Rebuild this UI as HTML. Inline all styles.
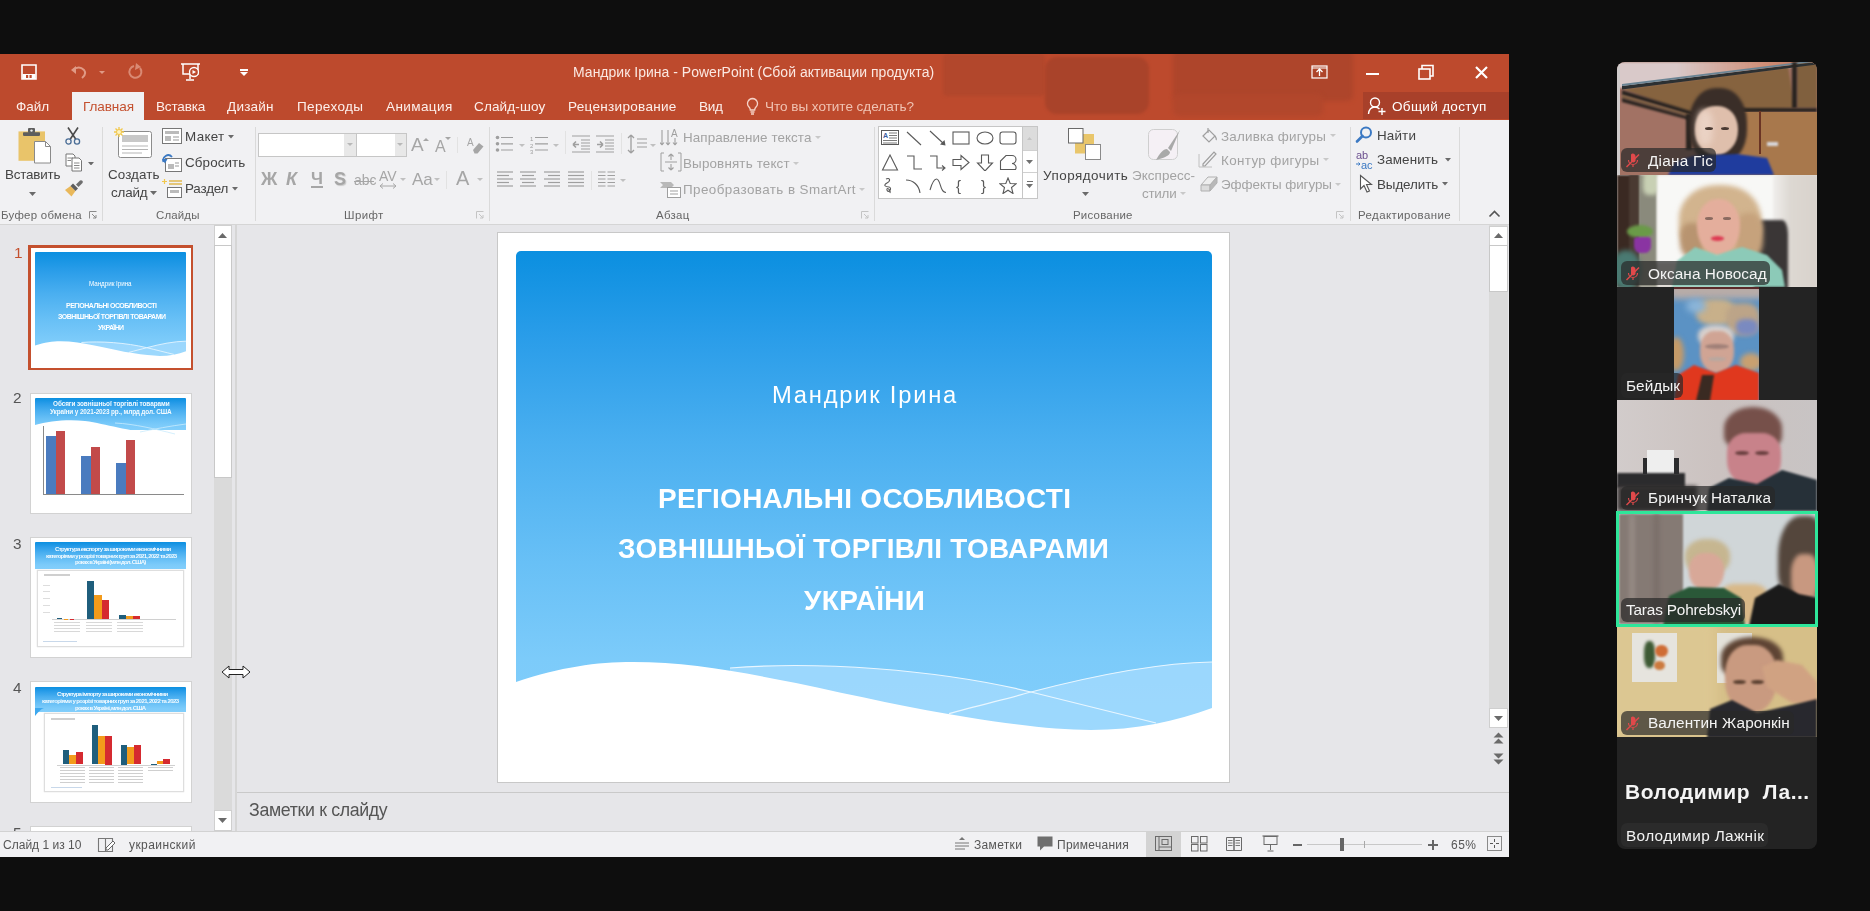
<!DOCTYPE html>
<html><head><meta charset="utf-8">
<style>
*{margin:0;padding:0;box-sizing:border-box}
html,body{width:1870px;height:911px;overflow:hidden;background:#0e0e0e;font-family:"Liberation Sans",sans-serif}
.a{position:absolute}
.tx{position:absolute;white-space:nowrap;will-change:transform}
</style></head><body>
<div class="a" style="left:0px;top:54px;width:1509px;height:66px;background:#bd4a2d;"></div><div class="a" style="left:0;top:54px;width:1509px;height:66px;overflow:hidden"><div class="a" style="left:943px;top:0px;width:102px;height:42px;border-radius:4px;background:#b2472c;filter:blur(1.5px)"></div><div class="a" style="left:1045px;top:3px;width:104px;height:57px;border-radius:12px;background:#a9432a;filter:blur(1.5px)"></div><div class="a" style="left:1173px;top:-4px;width:180px;height:51px;border-radius:6px;background:#ae452b;filter:blur(2px)"></div><div class="a" style="left:1173px;top:40px;width:150px;height:22px;border-radius:6px;background:#b2472c;filter:blur(2px)"></div></div><div class="a" style="left:72px;top:92px;width:72px;height:29px;background:#f1f1f3;"></div><div class="a" style="left:0px;top:120px;width:1509px;height:104px;background:#f1f1f3;"></div><div class="a" style="left:0px;top:224px;width:1509px;height:1px;background:#d5d5d5;"></div><div class="a" style="left:0px;top:225px;width:1509px;height:606px;background:#e6e6e9;"></div><div class="a" style="left:0px;top:831px;width:1509px;height:1px;background:#d2d2d2;"></div><div class="a" style="left:0px;top:832px;width:1509px;height:25px;background:#f1f1f3;"></div><span class="tx" style="left:573.00px;top:66.28px;font-size:13.97px;line-height:13.97px;color:#fbe8e2;font-weight:normal;letter-spacing:0.032px;font-family:"Liberation Sans",sans-serif;">Мандрик Ірина - PowerPoint (Сбой активации продукта)</span><svg class="a" style="left:21px;top:64px;" width="16" height="16" viewBox="0 0 16 16"><path d="M1 1H15V15H1Z" fill="none" stroke="#fff" stroke-width="1.6"/><rect x="1.5" y="10" width="13" height="5" fill="#fff"/><rect x="5" y="11" width="2.2" height="3" fill="#bd4a2d"/><rect x="8.5" y="11" width="2.2" height="3" fill="#bd4a2d"/></svg><svg class="a" style="left:70px;top:63px;" width="18" height="18" viewBox="0 0 18 18"><path d="M3 7 Q9 2 14 7 Q17 11 12 15" fill="none" stroke="#e09a85" stroke-width="2"/><path d="M1 7L6 3V11Z" fill="#e09a85"/></svg><svg class="a" style="left:99.0px;top:70.5px;" width="6" height="3" viewBox="0 0 6 3"><path d="M0 0H6L3.0 3Z" fill="#e09a85"/></svg><svg class="a" style="left:126px;top:63px;" width="18" height="18" viewBox="0 0 18 18"><path d="M14 5 A6 6 0 1 1 8 3" fill="none" stroke="#d98a74" stroke-width="2"/><path d="M10 0L15 4L9 7Z" fill="#d98a74"/></svg><svg class="a" style="left:180px;top:62px;" width="22" height="20" viewBox="0 0 22 20"><path d="M1 2H20M3 2V12H18V2" fill="none" stroke="#fff" stroke-width="1.5"/><path d="M10 12V17M6 18H14" stroke="#fff" stroke-width="1.5"/><circle cx="14" cy="10" r="4.5" fill="#bd4a2d" stroke="#fff" stroke-width="1.3"/><path d="M12.5 8V12L16 10Z" fill="#fff"/></svg><svg class="a" style="left:240.0px;top:72.0px;" width="8" height="4" viewBox="0 0 8 4"><path d="M0 0H8L4.0 4Z" fill="#fff"/></svg><div class="a" style="left:240px;top:69.3px;width:8px;height:1.5px;background:#fff;"></div><svg class="a" style="left:1311px;top:65px;" width="17" height="15" viewBox="0 0 17 15"><rect x="1" y="1" width="15" height="12" fill="none" stroke="#fff" stroke-width="1.2"/><path d="M8.5 11V4M5.5 7L8.5 4L11.5 7" fill="none" stroke="#fff" stroke-width="1.3"/><path d="M1 3H16" stroke="#fff" stroke-width="1"/></svg><div class="a" style="left:1366px;top:73px;width:13px;height:2px;background:#fff;"></div><svg class="a" style="left:1418px;top:64px;" width="17" height="17" viewBox="0 0 17 17"><rect x="1" y="5" width="11" height="10" fill="none" stroke="#fff" stroke-width="1.6"/><path d="M4 5V1.5H15V12H12" fill="none" stroke="#fff" stroke-width="1.6"/></svg><svg class="a" style="left:1474px;top:65px;" width="15" height="15" viewBox="0 0 15 15"><path d="M2 2L13 13M13 2L2 13" stroke="#fff" stroke-width="2.2"/></svg><span class="tx" style="left:16.00px;top:99.93px;font-size:13.55px;line-height:13.55px;color:#fdf0ec;font-weight:normal;letter-spacing:-0.057px;font-family:"Liberation Sans",sans-serif;">Файл</span><span class="tx" style="left:82.60px;top:99.93px;font-size:13.55px;line-height:13.55px;color:#c4502f;font-weight:normal;letter-spacing:-0.097px;font-family:"Liberation Sans",sans-serif;">Главная</span><span class="tx" style="left:155.60px;top:99.93px;font-size:13.55px;line-height:13.55px;color:#fdf0ec;font-weight:normal;letter-spacing:-0.168px;font-family:"Liberation Sans",sans-serif;">Вставка</span><span class="tx" style="left:227.00px;top:99.93px;font-size:13.55px;line-height:13.55px;color:#fdf0ec;font-weight:normal;letter-spacing:0.206px;font-family:"Liberation Sans",sans-serif;">Дизайн</span><span class="tx" style="left:296.50px;top:99.93px;font-size:13.55px;line-height:13.55px;color:#fdf0ec;font-weight:normal;letter-spacing:0.355px;font-family:"Liberation Sans",sans-serif;">Переходы</span><span class="tx" style="left:385.50px;top:99.93px;font-size:13.55px;line-height:13.55px;color:#fdf0ec;font-weight:normal;letter-spacing:0.374px;font-family:"Liberation Sans",sans-serif;">Анимация</span><span class="tx" style="left:474.00px;top:99.93px;font-size:13.55px;line-height:13.55px;color:#fdf0ec;font-weight:normal;letter-spacing:0.128px;font-family:"Liberation Sans",sans-serif;">Слайд-шоу</span><span class="tx" style="left:568.40px;top:99.93px;font-size:13.55px;line-height:13.55px;color:#fdf0ec;font-weight:normal;letter-spacing:0.291px;font-family:"Liberation Sans",sans-serif;">Рецензирование</span><span class="tx" style="left:698.80px;top:99.93px;font-size:13.55px;line-height:13.55px;color:#fdf0ec;font-weight:normal;letter-spacing:-0.277px;font-family:"Liberation Sans",sans-serif;">Вид</span><svg class="a" style="left:746px;top:97px;" width="13" height="19" viewBox="0 0 13 19"><path d="M6.5 1.5A5 5 0 0 0 3 10C4 11 4.3 12 4.3 13H8.7C8.7 12 9 11 10 10A5 5 0 0 0 6.5 1.5Z" fill="none" stroke="#f6d3c8" stroke-width="1.3"/><path d="M4.5 15H8.5M5 17H8" stroke="#f6d3c8" stroke-width="1.3"/></svg><span class="tx" style="left:765.00px;top:99.93px;font-size:13.55px;line-height:13.55px;color:#f0c3b3;font-weight:normal;letter-spacing:-0.031px;font-family:"Liberation Sans",sans-serif;">Что вы хотите сделать?</span><div class="a" style="left:1363px;top:92px;width:146px;height:27px;background:#a8402a;"></div><svg class="a" style="left:1367px;top:96px;" width="20" height="20" viewBox="0 0 20 20"><circle cx="8" cy="6.5" r="4.5" fill="none" stroke="#fff" stroke-width="1.4"/><path d="M1.5 18C2 13 5 11 8 11C10 11 11.5 12 12.5 13" fill="none" stroke="#fff" stroke-width="1.4"/><path d="M15 12V19M11.5 15.5H18.5" stroke="#fff" stroke-width="1.4"/></svg><span class="tx" style="left:1392.40px;top:99.93px;font-size:13.55px;line-height:13.55px;color:#ffffff;font-weight:normal;letter-spacing:0.304px;font-family:"Liberation Sans",sans-serif;">Общий доступ</span><div class="a" style="left:102px;top:127px;width:1px;height:94px;background:#dadada;"></div><div class="a" style="left:254.5px;top:127px;width:1.0px;height:94px;background:#dadada;"></div><div class="a" style="left:489px;top:127px;width:1px;height:94px;background:#dadada;"></div><div class="a" style="left:874px;top:127px;width:1px;height:94px;background:#dadada;"></div><div class="a" style="left:1349.5px;top:127px;width:1.0px;height:94px;background:#dadada;"></div><div class="a" style="left:1458.5px;top:127px;width:1.0px;height:94px;background:#dadada;"></div><svg class="a" style="left:16px;top:126px;" width="40" height="40" viewBox="0 0 40 40"><rect x="2.5" y="5.4" width="26.5" height="29.4" fill="#e9c46a"/><rect x="7" y="6.3" width="17" height="3.6" rx="0.8" fill="#5e5e5e"/><rect x="12" y="2" width="7" height="5" rx="1" fill="#5e5e5e"/><circle cx="15.5" cy="4.6" r="1.2" fill="#eee"/><path d="M18.5 15.5H29.5L34.5 20.5V37H18.5Z" fill="#fff" stroke="#8a8a8a" stroke-width="1"/><path d="M29.5 15.5V20.5H34.5" fill="none" stroke="#8a8a8a" stroke-width="1"/></svg><span class="tx" style="left:5.00px;top:168.25px;font-size:13.41px;line-height:13.41px;color:#444444;font-weight:normal;letter-spacing:-0.194px;font-family:"Liberation Sans",sans-serif;">Вставить</span><svg class="a" style="left:29.0px;top:191.5px;" width="7" height="4" viewBox="0 0 7 4"><path d="M0 0H7L3.5 4Z" fill="#6a6a6a"/></svg><svg class="a" style="left:64px;top:127px;" width="18" height="19" viewBox="0 0 18 19"><path d="M4 0.5L11.8 12.2M14 0.5L6.2 12.2" stroke="#4a4a4a" stroke-width="1.6"/><circle cx="4.5" cy="14.5" r="2.6" fill="none" stroke="#4a6d96" stroke-width="1.3"/><circle cx="13" cy="14.5" r="2.6" fill="none" stroke="#4a6d96" stroke-width="1.3"/></svg><svg class="a" style="left:65px;top:153px;" width="18" height="19" viewBox="0 0 18 19"><path d="M1 1H8L10 3V13H1Z" fill="#fff" stroke="#777" stroke-width="1"/><path d="M7 5H14L16.5 7.5V18H7Z" fill="#fff" stroke="#777" stroke-width="1"/><path d="M2.5 5H8M2.5 7.5H6M9 10H14.5M9 12.5H14.5M9 15H14.5" stroke="#888" stroke-width="1"/></svg><svg class="a" style="left:87.5px;top:161.75px;" width="6" height="3.5" viewBox="0 0 6 3.5"><path d="M0 0H6L3.0 3.5Z" fill="#6a6a6a"/></svg><svg class="a" style="left:64px;top:179px;" width="20" height="19" viewBox="0 0 20 19"><path d="M1 11L6.5 7L11.5 12L7.5 17.5Z" fill="#e9b85a"/><path d="M6.5 7L9 4.5L14 9.5L11.5 12Z" fill="#5e5e5e"/><path d="M12 5.5L16 1.5A1.8 1.8 0 0 1 18.5 4L14.5 8Z" fill="#6e6e6e"/></svg><span class="tx" style="left:1.00px;top:209.81px;font-size:11.45px;line-height:11.45px;color:#666666;font-weight:normal;letter-spacing:0.266px;font-family:"Liberation Sans",sans-serif;">Буфер обмена</span><svg class="a" style="left:89px;top:211px;" width="8" height="8" viewBox="0 0 8 8"><path d="M0.5 7.5V0.5H7.5" fill="none" stroke="#8a8a8a" stroke-width="1"/><path d="M3 3L7 7M4 7H7V4" fill="none" stroke="#8a8a8a" stroke-width="1"/></svg><svg class="a" style="left:112px;top:125px;" width="42" height="36" viewBox="0 0 42 36"><rect x="6.5" y="6.5" width="33" height="26" rx="2" fill="#fff" stroke="#8c8c8c" stroke-width="1"/><rect x="10" y="10" width="26" height="7" fill="#c8c8c8"/><path d="M10 21H36M10 24.5H36M10 28H30" stroke="#b5b5b5" stroke-width="1"/><g stroke="#f2c84b" stroke-width="1.3"><path d="M2 7H12M7 2V12M3.5 3.5L10.5 10.5M10.5 3.5L3.5 10.5"/></g><circle cx="7" cy="7" r="2.5" fill="#fff3c0" stroke="#f2c84b"/></svg><span class="tx" style="left:107.50px;top:168.45px;font-size:13.41px;line-height:13.41px;color:#444444;font-weight:normal;letter-spacing:0.089px;font-family:"Liberation Sans",sans-serif;">Создать</span><span class="tx" style="left:110.70px;top:186.15px;font-size:13.41px;line-height:13.41px;color:#444444;font-weight:normal;letter-spacing:-0.185px;font-family:"Liberation Sans",sans-serif;">слайд</span><svg class="a" style="left:150.0px;top:191.0px;" width="7" height="4" viewBox="0 0 7 4"><path d="M0 0H7L3.5 4Z" fill="#6a6a6a"/></svg><svg class="a" style="left:162px;top:128px;" width="21" height="17" viewBox="0 0 21 17"><rect x="0.5" y="0.5" width="19" height="15" fill="#fff" stroke="#777"/><rect x="3" y="3" width="14" height="3" fill="#bbb"/><rect x="3" y="8" width="6" height="5" fill="#bbb"/><path d="M11 9H17M11 12H17" stroke="#999"/></svg><span class="tx" style="left:185.30px;top:130.35px;font-size:13.41px;line-height:13.41px;color:#444444;font-weight:normal;letter-spacing:0.324px;font-family:"Liberation Sans",sans-serif;">Макет</span><svg class="a" style="left:227.5px;top:135.25px;" width="6" height="3.5" viewBox="0 0 6 3.5"><path d="M0 0H6L3.0 3.5Z" fill="#6a6a6a"/></svg><svg class="a" style="left:162px;top:154px;" width="21" height="18" viewBox="0 0 21 18"><rect x="3.5" y="4.5" width="16" height="13" fill="#fff" stroke="#777"/><rect x="6" y="10" width="6" height="5" fill="#bbb"/><path d="M13 9H17M13 12H17" stroke="#999"/><path d="M1.5 8A5 5 0 0 1 10 3" fill="none" stroke="#3b79c3" stroke-width="1.8"/><path d="M0 5L3 9.5L5.5 5Z" fill="#3b79c3"/></svg><span class="tx" style="left:185.30px;top:156.45px;font-size:13.41px;line-height:13.41px;color:#444444;font-weight:normal;letter-spacing:0.110px;font-family:"Liberation Sans",sans-serif;">Сбросить</span><svg class="a" style="left:162px;top:179px;" width="21" height="19" viewBox="0 0 21 19"><path d="M0 2.5H5M2.5 0V5" stroke="#f2c84b" stroke-width="1.2"/><path d="M7 2H20M7 5H20" stroke="#e0b850" stroke-width="1.5"/><rect x="5.5" y="8.5" width="14" height="10" fill="#fff" stroke="#777"/><rect x="8" y="11" width="9" height="3" fill="#bbb"/></svg><span class="tx" style="left:185.30px;top:182.15px;font-size:13.41px;line-height:13.41px;color:#444444;font-weight:normal;letter-spacing:-0.173px;font-family:"Liberation Sans",sans-serif;">Раздел</span><svg class="a" style="left:231.5px;top:187.25px;" width="6" height="3.5" viewBox="0 0 6 3.5"><path d="M0 0H6L3.0 3.5Z" fill="#6a6a6a"/></svg><span class="tx" style="left:156.40px;top:209.81px;font-size:11.45px;line-height:11.45px;color:#666666;font-weight:normal;letter-spacing:0.156px;font-family:"Liberation Sans",sans-serif;">Слайды</span><div class="a" style="left:258px;top:133px;width:148.5px;height:23.5px;background:#c6c6c6;"></div><div class="a" style="left:259px;top:134px;width:85px;height:21.5px;background:#ffffff;"></div><div class="a" style="left:344px;top:134px;width:11.5px;height:21.5px;background:#e8e8e8;"></div><div class="a" style="left:356.5px;top:134px;width:38.5px;height:21.5px;background:#ffffff;"></div><div class="a" style="left:395px;top:134px;width:10.5px;height:21.5px;background:#e8e8e8;"></div><svg class="a" style="left:346.7px;top:143.0px;" width="6" height="3" viewBox="0 0 6 3"><path d="M0 0H6L3.0 3Z" fill="#b8b8b8"/></svg><svg class="a" style="left:397.2px;top:143.0px;" width="6" height="3" viewBox="0 0 6 3"><path d="M0 0H6L3.0 3Z" fill="#b8b8b8"/></svg><span class="tx" style="left:411px;top:134px;font-size:19px;line-height:22px;color:#a6a6a6">A</span><svg class="a" style="left:423.0px;top:137.5px;" width="6" height="3" viewBox="0 0 6 3"><path d="M0 3H6L3.0 0Z" fill="#a6a6a6"/></svg><span class="tx" style="left:435px;top:138px;font-size:16px;line-height:18px;color:#a6a6a6">A</span><svg class="a" style="left:445.0px;top:136.5px;" width="6" height="3" viewBox="0 0 6 3"><path d="M0 0H6L3.0 3Z" fill="#a6a6a6"/></svg><div class="a" style="left:457px;top:137px;width:1px;height:16px;background:#e2e2e2;"></div><svg class="a" style="left:467px;top:137px;" width="18" height="17" viewBox="0 0 18 17"><text x="0" y="9" font-size="10" fill="#a6a6a6" font-family="Liberation Sans">A</text><path d="M6 13L12 6L16.5 9.5L10.5 16.5H7.5Z" fill="#a6a6a6"/></svg><span class="tx" style="left:260.5px;top:169px;font-size:18px;line-height:20px;font-weight:bold;color:#a6a6a6">Ж</span><span class="tx" style="left:286px;top:169px;font-size:18px;line-height:20px;font-weight:bold;font-style:italic;color:#a6a6a6">К</span><span class="tx" style="left:310.5px;top:169px;font-size:17px;line-height:20px;font-weight:bold;color:#a6a6a6">Ч</span><div class="a" style="left:310.5px;top:186px;width:12.0px;height:1.5px;background:#a6a6a6;"></div><span class="tx" style="left:334px;top:169px;font-size:18px;line-height:20px;font-weight:bold;color:#a6a6a6;text-shadow:1px 1px 1px #c8c8c8">S</span><span class="tx" style="left:354px;top:172px;font-size:14px;line-height:16px;color:#a6a6a6">abc</span><div class="a" style="left:354px;top:180.5px;width:20px;height:1.0px;background:#a6a6a6;"></div><span class="tx" style="left:379px;top:169px;font-size:14px;line-height:14px;color:#a6a6a6">AV</span><svg class="a" style="left:379px;top:183px;" width="18" height="6" viewBox="0 0 18 6"><path d="M1 3H17M1 3L4 0.5M1 3L4 5.5M17 3L14 0.5M17 3L14 5.5" fill="none" stroke="#a6a6a6" stroke-width="1"/></svg><svg class="a" style="left:399.5px;top:178.0px;" width="6" height="3" viewBox="0 0 6 3"><path d="M0 0H6L3.0 3Z" fill="#c0c0c0"/></svg><span class="tx" style="left:412px;top:170px;font-size:17px;line-height:19px;color:#a6a6a6">Aa</span><svg class="a" style="left:434.0px;top:178.0px;" width="6" height="3" viewBox="0 0 6 3"><path d="M0 0H6L3.0 3Z" fill="#c0c0c0"/></svg><div class="a" style="left:446px;top:171px;width:1px;height:18px;background:#e2e2e2;"></div><span class="tx" style="left:456px;top:167px;font-size:20px;line-height:22px;color:#a6a6a6">A</span><svg class="a" style="left:477.0px;top:178.0px;" width="6" height="3" viewBox="0 0 6 3"><path d="M0 0H6L3.0 3Z" fill="#c0c0c0"/></svg><span class="tx" style="left:343.60px;top:209.81px;font-size:11.45px;line-height:11.45px;color:#666666;font-weight:normal;letter-spacing:0.415px;font-family:"Liberation Sans",sans-serif;">Шрифт</span><svg class="a" style="left:476px;top:211px;" width="8" height="8" viewBox="0 0 8 8"><path d="M0.5 7.5V0.5H7.5" fill="none" stroke="#c4c4c4" stroke-width="1"/><path d="M3 3L7 7M4 7H7V4" fill="none" stroke="#c4c4c4" stroke-width="1"/></svg><svg class="a" style="left:495px;top:135px;" width="20" height="18" viewBox="0 0 20 18"><circle cx="2.5" cy="2.5" r="1.8" fill="#9f9f9f"/><circle cx="2.5" cy="8.8" r="1.8" fill="#9f9f9f"/><circle cx="2.5" cy="15" r="1.8" fill="#9f9f9f"/><path d="M6 2.5H18M6 8.8H18M6 15H18" stroke="#9f9f9f" stroke-width="1.2"/></svg><svg class="a" style="left:518.5px;top:143.5px;" width="6" height="3" viewBox="0 0 6 3"><path d="M0 0H6L3.0 3Z" fill="#c0c0c0"/></svg><svg class="a" style="left:530px;top:135px;" width="20" height="19" viewBox="0 0 20 19"><text x="0" y="6" font-size="6" fill="#9f9f9f" font-family="Liberation Sans">1</text><text x="0" y="12.5" font-size="6" fill="#9f9f9f" font-family="Liberation Sans">2</text><text x="0" y="18.5" font-size="6" fill="#9f9f9f" font-family="Liberation Sans">3</text><path d="M5 2.5H18M5 8.8H18M5 15H18" stroke="#9f9f9f" stroke-width="1.2"/></svg><svg class="a" style="left:553.0px;top:143.5px;" width="6" height="3" viewBox="0 0 6 3"><path d="M0 0H6L3.0 3Z" fill="#c0c0c0"/></svg><div class="a" style="left:565px;top:131px;width:1px;height:23px;background:#e2e2e2;"></div><svg class="a" style="left:572px;top:135px;" width="20" height="19" viewBox="0 0 20 19"><path d="M0 1H18M0 17H18" stroke="#9f9f9f" stroke-width="1.2"/><path d="M9 5H18M9 8H18M9 11H18M9 14H18" stroke="#9f9f9f" stroke-width="1"/><path d="M1 9.5H7M1 9.5L4 6.5M1 9.5L4 12.5" fill="none" stroke="#9f9f9f" stroke-width="1.6"/></svg><svg class="a" style="left:596px;top:135px;" width="20" height="19" viewBox="0 0 20 19"><path d="M0 1H18M0 17H18" stroke="#9f9f9f" stroke-width="1.2"/><path d="M9 5H18M9 8H18M9 11H18M9 14H18" stroke="#9f9f9f" stroke-width="1"/><path d="M1 9.5H7M7 9.5L4 6.5M7 9.5L4 12.5" fill="none" stroke="#9f9f9f" stroke-width="1.6"/></svg><div class="a" style="left:621px;top:133px;width:1px;height:21px;background:#e2e2e2;"></div><svg class="a" style="left:627px;top:134px;" width="22" height="20" viewBox="0 0 22 20"><path d="M4 1V19M4 1L1 4M4 1L7 4M4 19L1 16M4 19L7 16" fill="none" stroke="#9f9f9f" stroke-width="1.3"/><path d="M10 5H20M10 9H20M10 13H20" stroke="#9f9f9f" stroke-width="1.2"/></svg><svg class="a" style="left:650.0px;top:143.5px;" width="6" height="3" viewBox="0 0 6 3"><path d="M0 0H6L3.0 3Z" fill="#c0c0c0"/></svg><svg class="a" style="left:660px;top:127px;" width="22" height="20" viewBox="0 0 22 20"><path d="M2 3V18M2 18L0 15.5M2 18L4 15.5M8 3V18M8 18L6 15.5M8 18L10 15.5" fill="none" stroke="#9f9f9f" stroke-width="1.1"/><text x="11" y="10" font-size="10" fill="#9f9f9f" font-family="Liberation Sans">A</text><path d="M15 11V18M15 18L13 15.5M15 18L17 15.5" fill="none" stroke="#9f9f9f" stroke-width="1.1"/></svg><span class="tx" style="left:683.00px;top:130.65px;font-size:13.41px;line-height:13.41px;color:#a3a3a3;font-weight:normal;letter-spacing:0.077px;font-family:"Liberation Sans",sans-serif;">Направление текста</span><svg class="a" style="left:814.5px;top:135.5px;" width="6" height="3" viewBox="0 0 6 3"><path d="M0 0H6L3.0 3Z" fill="#c8c8c8"/></svg><svg class="a" style="left:660px;top:152px;" width="22" height="21" viewBox="0 0 22 21"><path d="M4 1H1V19H4M18 1H21V19H18" fill="none" stroke="#9f9f9f" stroke-width="1"/><path d="M11 2V8M11 2L8.5 4.5M11 2L13.5 4.5M11 18V12M11 18L8.5 15.5M11 18L13.5 15.5M5 10H17" fill="none" stroke="#9f9f9f" stroke-width="1.1"/></svg><span class="tx" style="left:683.00px;top:156.65px;font-size:13.41px;line-height:13.41px;color:#a3a3a3;font-weight:normal;letter-spacing:0.156px;font-family:"Liberation Sans",sans-serif;">Выровнять текст</span><svg class="a" style="left:792.5px;top:161.5px;" width="6" height="3" viewBox="0 0 6 3"><path d="M0 0H6L3.0 3Z" fill="#c8c8c8"/></svg><svg class="a" style="left:660px;top:181px;" width="22" height="18" viewBox="0 0 22 18"><path d="M0 1H11L14 4L11 7H0L3 4Z" fill="#b8b8b8"/><rect x="7.5" y="6.5" width="13" height="10" fill="#fff" stroke="#9f9f9f"/><path d="M10 10H18M10 13H18" stroke="#9f9f9f"/></svg><span class="tx" style="left:683.00px;top:182.65px;font-size:13.41px;line-height:13.41px;color:#a3a3a3;font-weight:normal;letter-spacing:0.431px;font-family:"Liberation Sans",sans-serif;">Преобразовать в SmartArt</span><svg class="a" style="left:858.5px;top:187.5px;" width="6" height="3" viewBox="0 0 6 3"><path d="M0 0H6L3.0 3Z" fill="#c8c8c8"/></svg><svg class="a" style="left:497px;top:169px;" width="17" height="20" viewBox="0 0 17 20"><path d="M0 3H16" stroke="#9f9f9f" stroke-width="1.2"/><path d="M0 6.5H12" stroke="#9f9f9f" stroke-width="1.2"/><path d="M0 10H16" stroke="#9f9f9f" stroke-width="1.2"/><path d="M0 13.5H12" stroke="#9f9f9f" stroke-width="1.2"/><path d="M0 17H16" stroke="#9f9f9f" stroke-width="1.2"/></svg><svg class="a" style="left:520px;top:169px;" width="17" height="20" viewBox="0 0 17 20"><path d="M0 3H16" stroke="#9f9f9f" stroke-width="1.2"/><path d="M2 6.5H14" stroke="#9f9f9f" stroke-width="1.2"/><path d="M0 10H16" stroke="#9f9f9f" stroke-width="1.2"/><path d="M2 13.5H14" stroke="#9f9f9f" stroke-width="1.2"/><path d="M0 17H16" stroke="#9f9f9f" stroke-width="1.2"/></svg><svg class="a" style="left:544px;top:169px;" width="17" height="20" viewBox="0 0 17 20"><path d="M0 3H16" stroke="#9f9f9f" stroke-width="1.2"/><path d="M4 6.5H16" stroke="#9f9f9f" stroke-width="1.2"/><path d="M0 10H16" stroke="#9f9f9f" stroke-width="1.2"/><path d="M4 13.5H16" stroke="#9f9f9f" stroke-width="1.2"/><path d="M0 17H16" stroke="#9f9f9f" stroke-width="1.2"/></svg><svg class="a" style="left:568px;top:169px;" width="17" height="20" viewBox="0 0 17 20"><path d="M0 3H16" stroke="#9f9f9f" stroke-width="1.2"/><path d="M0 6.5H16" stroke="#9f9f9f" stroke-width="1.2"/><path d="M0 10H16" stroke="#9f9f9f" stroke-width="1.2"/><path d="M0 13.5H16" stroke="#9f9f9f" stroke-width="1.2"/><path d="M0 17H16" stroke="#9f9f9f" stroke-width="1.2"/></svg><div class="a" style="left:591px;top:171px;width:1px;height:19px;background:#e2e2e2;"></div><svg class="a" style="left:598px;top:169px;" width="18" height="20" viewBox="0 0 18 20"><path d="M0 3H7.5M9.5 3H17" stroke="#9f9f9f" stroke-width="1.2"/><path d="M0 6.5H7.5M9.5 6.5H17" stroke="#9f9f9f" stroke-width="1.2"/><path d="M0 10H7.5M9.5 10H17" stroke="#9f9f9f" stroke-width="1.2"/><path d="M0 13.5H7.5M9.5 13.5H17" stroke="#9f9f9f" stroke-width="1.2"/><path d="M0 17H7.5M9.5 17H17" stroke="#9f9f9f" stroke-width="1.2"/></svg><svg class="a" style="left:619.5px;top:178.5px;" width="6" height="3" viewBox="0 0 6 3"><path d="M0 0H6L3.0 3Z" fill="#c0c0c0"/></svg><span class="tx" style="left:655.80px;top:209.81px;font-size:11.45px;line-height:11.45px;color:#666666;font-weight:normal;letter-spacing:0.304px;font-family:"Liberation Sans",sans-serif;">Абзац</span><svg class="a" style="left:861px;top:211px;" width="8" height="8" viewBox="0 0 8 8"><path d="M0.5 7.5V0.5H7.5" fill="none" stroke="#c4c4c4" stroke-width="1"/><path d="M3 3L7 7M4 7H7V4" fill="none" stroke="#c4c4c4" stroke-width="1"/></svg><div class="a" style="left:878px;top:126px;width:160px;height:73px;background:#c6c6c6;"></div><div class="a" style="left:879px;top:127px;width:142.5px;height:71px;background:#ffffff;"></div><div class="a" style="left:1022.5px;top:127px;width:14.5px;height:23px;background:#dcdcdc;"></div><div class="a" style="left:1022.5px;top:150px;width:14.5px;height:1px;background:#d0d0d0;"></div><div class="a" style="left:1022.5px;top:151px;width:14.5px;height:21px;background:#ffffff;"></div><div class="a" style="left:1022.5px;top:172px;width:14.5px;height:1px;background:#d0d0d0;"></div><div class="a" style="left:1022.5px;top:173px;width:14.5px;height:25px;background:#ffffff;"></div><svg class="a" style="left:1027.3px;top:136.5px;" width="5" height="3" viewBox="0 0 5 3"><path d="M0 3H5L2.5 0Z" fill="#c4c4c4"/></svg><svg class="a" style="left:1026.3px;top:159.5px;" width="7" height="4" viewBox="0 0 7 4"><path d="M0 0H7L3.5 4Z" fill="#707070"/></svg><div class="a" style="left:1026.5px;top:181px;width:6.5px;height:1px;background:#707070;"></div><svg class="a" style="left:1026.3px;top:183.5px;" width="7" height="4" viewBox="0 0 7 4"><path d="M0 0H7L3.5 4Z" fill="#707070"/></svg><svg class="a" style="left:880.7px;top:129.8px;" width="18" height="17" viewBox="0 0 18 17"><rect x="0.5" y="0.5" width="17" height="14" fill="#fff" stroke="#595959"/><text x="2" y="8" font-size="7" font-weight="bold" fill="#3b5ca0" font-family="Liberation Sans">A</text><path d="M8 3H16M8 5.5H16M8 8H16M2 10.5H16M2 13H16" stroke="#595959" stroke-width="0.8"/></svg><svg class="a" style="left:905px;top:129.8px;" width="18" height="17" viewBox="0 0 18 17"><path d="M2 2L16 15" stroke="#595959" stroke-width="1.1"/></svg><svg class="a" style="left:929px;top:129.8px;" width="18" height="17" viewBox="0 0 18 17"><path d="M1 1L15 14" stroke="#595959" stroke-width="1.1"/><path d="M16.5 15.5L11 14.5L15.5 10Z" fill="#595959"/></svg><svg class="a" style="left:952px;top:129.8px;" width="18" height="17" viewBox="0 0 18 17"><rect x="1" y="2" width="16" height="12" fill="none" stroke="#595959" stroke-width="1.1"/></svg><svg class="a" style="left:975.5px;top:129.8px;" width="18" height="17" viewBox="0 0 18 17"><ellipse cx="9" cy="8" rx="8" ry="6" fill="none" stroke="#595959" stroke-width="1.1"/></svg><svg class="a" style="left:999px;top:129.8px;" width="18" height="17" viewBox="0 0 18 17"><rect x="1" y="2" width="16" height="12" rx="2.5" fill="none" stroke="#595959" stroke-width="1.1"/></svg><svg class="a" style="left:880.7px;top:153.9px;" width="18" height="17" viewBox="0 0 18 17"><path d="M9 1L16.5 16H1.5Z" fill="none" stroke="#595959" stroke-width="1.1"/></svg><svg class="a" style="left:905px;top:153.9px;" width="18" height="17" viewBox="0 0 18 17"><path d="M2 2H9V15H17" fill="none" stroke="#595959" stroke-width="1.1"/></svg><svg class="a" style="left:929px;top:153.9px;" width="18" height="17" viewBox="0 0 18 17"><path d="M1 2H8V14H15M13 11.5L16 14L13 16.5" fill="none" stroke="#595959" stroke-width="1.1"/></svg><svg class="a" style="left:952px;top:153.9px;" width="18" height="17" viewBox="0 0 18 17"><path d="M1 5.5H9V1.5L17 8.5L9 15.5V11.5H1Z" fill="none" stroke="#595959" stroke-width="1.1"/></svg><svg class="a" style="left:975.5px;top:153.9px;" width="18" height="17" viewBox="0 0 18 17"><path d="M5.5 1H12.5V9H16.5L9 17L1.5 9H5.5Z" fill="none" stroke="#595959" stroke-width="1.1"/></svg><svg class="a" style="left:999px;top:153.9px;" width="18" height="17" viewBox="0 0 18 17"><path d="M1.5 15.5V7L7 1.5H13A4 4 0 0 1 13 9.5A4 4 0 0 1 16.5 15.5Z" fill="none" stroke="#595959" stroke-width="1.1"/></svg><svg class="a" style="left:880.7px;top:176.8px;" width="18" height="17" viewBox="0 0 18 17"><path d="M5 2C9 0 10 4 6 6C2 8 4 10 8 10C12 11 7 17 6 13C5 10 10 12 9 16" fill="none" stroke="#595959" stroke-width="1.1"/></svg><svg class="a" style="left:905px;top:176.8px;" width="18" height="17" viewBox="0 0 18 17"><path d="M1 3C8 3 14 8 15 16" fill="none" stroke="#595959" stroke-width="1.1"/></svg><svg class="a" style="left:929px;top:176.8px;" width="18" height="17" viewBox="0 0 18 17"><path d="M1 13C3 6 5 2 7.5 2C10.5 2 11 9 13 12.5C14 14.5 15.5 15.5 17 15.5" fill="none" stroke="#595959" stroke-width="1.1"/></svg><svg class="a" style="left:952px;top:176.8px;" width="18" height="17" viewBox="0 0 18 17"><text x="4" y="14" font-size="15" fill="#595959" font-family="Liberation Sans">{</text></svg><svg class="a" style="left:975.5px;top:176.8px;" width="18" height="17" viewBox="0 0 18 17"><text x="5" y="14" font-size="15" fill="#595959" font-family="Liberation Sans">}</text></svg><svg class="a" style="left:999px;top:176.8px;" width="18" height="17" viewBox="0 0 18 17"><path d="M9 1L11.2 6.5L17 6.8L12.5 10.5L14 16.5L9 13.2L4 16.5L5.5 10.5L1 6.8L6.8 6.5Z" fill="none" stroke="#595959" stroke-width="1.1"/></svg><svg class="a" style="left:1066px;top:126px;" width="38" height="36" viewBox="0 0 38 36"><rect x="9" y="8" width="19" height="19.5" fill="#e9c66b"/><rect x="2.5" y="2.5" width="14.5" height="14.5" fill="#fff" stroke="#6a6a6a" stroke-width="1"/><rect x="19.5" y="18.5" width="15" height="15" fill="#fff" stroke="#8a8a8a" stroke-width="1"/></svg><span class="tx" style="left:1042.70px;top:169.15px;font-size:13.41px;line-height:13.41px;color:#444444;font-weight:normal;letter-spacing:0.508px;font-family:"Liberation Sans",sans-serif;">Упорядочить</span><svg class="a" style="left:1081.5px;top:191.5px;" width="7" height="4" viewBox="0 0 7 4"><path d="M0 0H7L3.5 4Z" fill="#6a6a6a"/></svg><svg class="a" style="left:1146px;top:127px;" width="36" height="36" viewBox="0 0 36 36"><rect x="2.5" y="2.5" width="29" height="30" rx="5" fill="#f5f0f5" stroke="#cfcfcf" stroke-width="1"/><path d="M34 3L22 21L25 24Z" fill="#a9a9a9"/><path d="M21 22C17 22 14 26 10 33C17 31 24 29 24 25Z" fill="#a9a9a9"/></svg><span class="tx" style="left:1131.60px;top:169.15px;font-size:13.41px;line-height:13.41px;color:#a3a3a3;font-weight:normal;letter-spacing:0.085px;font-family:"Liberation Sans",sans-serif;">Экспресс-</span><span class="tx" style="left:1141.60px;top:186.85px;font-size:13.41px;line-height:13.41px;color:#a3a3a3;font-weight:normal;letter-spacing:-0.237px;font-family:"Liberation Sans",sans-serif;">стили</span><svg class="a" style="left:1180.0px;top:192.0px;" width="6" height="3" viewBox="0 0 6 3"><path d="M0 0H6L3.0 3Z" fill="#c8c8c8"/></svg><svg class="a" style="left:1201px;top:127px;" width="18" height="17" viewBox="0 0 18 17"><path d="M2 9L8 3L14 9L8 15Z" fill="none" stroke="#9f9f9f" stroke-width="1.2"/><path d="M7 1V6" stroke="#9f9f9f" stroke-width="1.2"/><path d="M14 9C15 11 16 12 15 13" fill="none" stroke="#9f9f9f" stroke-width="1.3"/></svg><span class="tx" style="left:1221.00px;top:129.65px;font-size:13.41px;line-height:13.41px;color:#a3a3a3;font-weight:normal;letter-spacing:0.192px;font-family:"Liberation Sans",sans-serif;">Заливка фигуры</span><svg class="a" style="left:1329.5px;top:134.0px;" width="6" height="3" viewBox="0 0 6 3"><path d="M0 0H6L3.0 3Z" fill="#c8c8c8"/></svg><svg class="a" style="left:1198px;top:150px;" width="20" height="18" viewBox="0 0 20 18"><path d="M1 4V17H14" fill="none" stroke="#c0c0c0" stroke-width="1"/><path d="M5 14L16 2L18 4L7 16H5Z" fill="none" stroke="#9f9f9f" stroke-width="1.2"/></svg><span class="tx" style="left:1221.00px;top:153.65px;font-size:13.41px;line-height:13.41px;color:#a3a3a3;font-weight:normal;letter-spacing:0.363px;font-family:"Liberation Sans",sans-serif;">Контур фигуры</span><svg class="a" style="left:1323.0px;top:158.0px;" width="6" height="3" viewBox="0 0 6 3"><path d="M0 0H6L3.0 3Z" fill="#c8c8c8"/></svg><svg class="a" style="left:1199px;top:175px;" width="20" height="17" viewBox="0 0 20 17"><path d="M2 10L9 2H18L11 10Z" fill="#eeeeee" stroke="#b0b0b0"/><path d="M2 10H11V16H2Z" fill="#dcdcdc" stroke="#b0b0b0"/><path d="M11 10L18 2V8L11 16Z" fill="#b8b8b8" stroke="#b0b0b0"/></svg><span class="tx" style="left:1221.00px;top:178.15px;font-size:13.41px;line-height:13.41px;color:#a3a3a3;font-weight:normal;letter-spacing:-0.062px;font-family:"Liberation Sans",sans-serif;">Эффекты фигуры</span><svg class="a" style="left:1335.0px;top:183.0px;" width="6" height="3" viewBox="0 0 6 3"><path d="M0 0H6L3.0 3Z" fill="#c8c8c8"/></svg><span class="tx" style="left:1072.80px;top:209.81px;font-size:11.45px;line-height:11.45px;color:#666666;font-weight:normal;letter-spacing:0.234px;font-family:"Liberation Sans",sans-serif;">Рисование</span><svg class="a" style="left:1336px;top:211px;" width="8" height="8" viewBox="0 0 8 8"><path d="M0.5 7.5V0.5H7.5" fill="none" stroke="#c4c4c4" stroke-width="1"/><path d="M3 3L7 7M4 7H7V4" fill="none" stroke="#c4c4c4" stroke-width="1"/></svg><svg class="a" style="left:1355px;top:126px;" width="18" height="18" viewBox="0 0 18 18"><circle cx="11" cy="6.5" r="5" fill="none" stroke="#3b79c3" stroke-width="2"/><path d="M7.5 10L2 15.5" stroke="#3b79c3" stroke-width="2.6" stroke-linecap="round"/></svg><span class="tx" style="left:1377.00px;top:129.45px;font-size:13.41px;line-height:13.41px;color:#444444;font-weight:normal;letter-spacing:0.161px;font-family:"Liberation Sans",sans-serif;">Найти</span><svg class="a" style="left:1355px;top:150px;" width="22" height="20" viewBox="0 0 22 20"><text x="1" y="9" font-size="11" fill="#6b4f8f" font-family="Liberation Sans">ab</text><text x="6" y="19" font-size="11" fill="#3b79c3" font-family="Liberation Sans">ac</text><path d="M1 14H5M3.5 12.5L5 14L3.5 15.5" fill="none" stroke="#3b79c3" stroke-width="1"/></svg><span class="tx" style="left:1377.00px;top:153.45px;font-size:13.41px;line-height:13.41px;color:#444444;font-weight:normal;letter-spacing:0.103px;font-family:"Liberation Sans",sans-serif;">Заменить</span><svg class="a" style="left:1445.0px;top:158.25px;" width="6" height="3.5" viewBox="0 0 6 3.5"><path d="M0 0H6L3.0 3.5Z" fill="#6a6a6a"/></svg><svg class="a" style="left:1359px;top:174px;" width="14" height="20" viewBox="0 0 14 20"><path d="M1.5 1.5V15L5 11.5L8 18L10.5 17L7.5 10.5H12.5Z" fill="#fff" stroke="#555" stroke-width="1.1"/></svg><span class="tx" style="left:1377.00px;top:177.85px;font-size:13.41px;line-height:13.41px;color:#444444;font-weight:normal;letter-spacing:-0.098px;font-family:"Liberation Sans",sans-serif;">Выделить</span><svg class="a" style="left:1441.5px;top:182.25px;" width="6" height="3.5" viewBox="0 0 6 3.5"><path d="M0 0H6L3.0 3.5Z" fill="#6a6a6a"/></svg><span class="tx" style="left:1357.60px;top:209.81px;font-size:11.45px;line-height:11.45px;color:#666666;font-weight:normal;letter-spacing:0.427px;font-family:"Liberation Sans",sans-serif;">Редактирование</span><svg class="a" style="left:1488px;top:209px;" width="13" height="9" viewBox="0 0 13 9"><path d="M1.5 7.5L6.5 2.5L11.5 7.5" fill="none" stroke="#555" stroke-width="1.6"/></svg><div class="a" style="left:213.5px;top:225px;width:18.5px;height:606px;background:#dadada;"></div><div class="a" style="left:213.5px;top:225px;width:18.5px;height:21px;background:#ffffff;border:1px solid #cfcfcf;"></div><svg class="a" style="left:218.3px;top:232.5px;" width="9" height="5" viewBox="0 0 9 5"><path d="M0 5H9L4.5 0Z" fill="#6a6a6a"/></svg><div class="a" style="left:213.5px;top:245px;width:18.5px;height:233px;background:#ffffff;border:1px solid #c8c8c8;"></div><div class="a" style="left:213.5px;top:810px;width:18.5px;height:21px;background:#ffffff;border:1px solid #cfcfcf;"></div><svg class="a" style="left:218.3px;top:818.0px;" width="9" height="5" viewBox="0 0 9 5"><path d="M0 0H9L4.5 5Z" fill="#6a6a6a"/></svg><div class="a" style="left:235px;top:225px;width:2px;height:606px;background:#d6d6d6;"></div><div class="a" style="left:1488.5px;top:225px;width:19.5px;height:483px;background:#dadada;"></div><div class="a" style="left:1488.5px;top:226px;width:19.5px;height:20px;background:#ffffff;border:1px solid #cfcfcf;"></div><svg class="a" style="left:1493.8px;top:233.0px;" width="9" height="5" viewBox="0 0 9 5"><path d="M0 5H9L4.5 0Z" fill="#6a6a6a"/></svg><div class="a" style="left:1488.5px;top:245px;width:19.5px;height:46.5px;background:#ffffff;border:1px solid #c8c8c8;"></div><div class="a" style="left:1488.5px;top:708px;width:19.5px;height:20px;background:#ffffff;border:1px solid #cfcfcf;"></div><svg class="a" style="left:1493.8px;top:715.5px;" width="9" height="5" viewBox="0 0 9 5"><path d="M0 0H9L4.5 5Z" fill="#6a6a6a"/></svg><svg class="a" style="left:1493px;top:732px;" width="11" height="12" viewBox="0 0 11 12"><path d="M0.5 5.5L5.5 0.5L10.5 5.5Z M0.5 11.5L5.5 6.5L10.5 11.5Z" fill="#6a6a6a"/></svg><svg class="a" style="left:1493px;top:753px;" width="11" height="12" viewBox="0 0 11 12"><path d="M0.5 0.5L5.5 5.5L10.5 0.5Z M0.5 6.5L5.5 11.5L10.5 6.5Z" fill="#6a6a6a"/></svg><div class="a" style="left:237px;top:792px;width:1272px;height:1px;background:#c9c9c9;"></div><span class="tx" style="left:249.30px;top:801.99px;font-size:17.74px;line-height:17.74px;color:#555555;font-weight:normal;letter-spacing:-0.327px;font-family:"Liberation Sans",sans-serif;">Заметки к слайду</span><span class="tx" style="left:14.00px;top:244.50px;font-size:15.36px;line-height:15.36px;color:#c4502e;font-weight:normal;letter-spacing:0.000px;font-family:"Liberation Sans",sans-serif;">1</span><span class="tx" style="left:13.00px;top:390.30px;font-size:15.36px;line-height:15.36px;color:#555;font-weight:normal;letter-spacing:0.000px;font-family:"Liberation Sans",sans-serif;">2</span><span class="tx" style="left:13.00px;top:535.50px;font-size:15.36px;line-height:15.36px;color:#555;font-weight:normal;letter-spacing:0.000px;font-family:"Liberation Sans",sans-serif;">3</span><span class="tx" style="left:13.00px;top:680.00px;font-size:15.36px;line-height:15.36px;color:#555;font-weight:normal;letter-spacing:0.000px;font-family:"Liberation Sans",sans-serif;">4</span><div class="a" style="left:28px;top:245px;width:165px;height:125px;background:#c4502e;"></div><div class="a" style="left:30.5px;top:247.5px;width:160.0px;height:120.0px;background:#ffffff;"></div><div class="a" style="left:29.5px;top:392.5px;width:162.0px;height:121.0px;background:#ffffff;border:1px solid #d2d2d2;"></div><div class="a" style="left:29.5px;top:536.7px;width:162.0px;height:121.5px;background:#ffffff;border:1px solid #d2d2d2;"></div><div class="a" style="left:29.5px;top:681.3px;width:162.0px;height:122.20000000000005px;background:#ffffff;border:1px solid #d2d2d2;"></div><div class="a" style="left:29.5px;top:826.2px;width:162.0px;height:4.7999999999999545px;background:#ffffff;border:1px solid #d2d2d2;border-bottom:none;"></div><span class="tx" style="left:13.00px;top:825.00px;font-size:15.36px;line-height:15.36px;color:#555;font-weight:normal;letter-spacing:0.000px;font-family:"Liberation Sans",sans-serif;">5</span><div class="a" style="left:35px;top:252px;width:151px;height:104px;background:linear-gradient(#0b8fe0 0%,#2a9de9 18%,#4aaff0 40%,#68c0f6 65%,#7ccbfa 85%,#82cefb 100%);border-radius:1px 1px 0 0;"></div><svg class="a" style="left:35px;top:252px;overflow:hidden" width="151" height="110" viewBox="0 0 696 507"><path d="M214 417 C300 410 420 418 515 441 C580 424 640 412 696 411 V480 H214Z" fill="#a6dbfd" opacity="0.75"/><path d="M214 417 C300 410 420 418 515 441 C560 452 600 462 640 472" fill="none" stroke="#e8f6ff" stroke-width="4"/><path d="M433 462.7 C460 455 490 448 515 441 C580 424 640 412 696 411" fill="none" stroke="#e8f6ff" stroke-width="4"/><path d="M0 431 C45 416 80 411 117 411 C170 411 220 420 280 432 C340 445 400 458 450 466 C500 474 540 479 575 479 C620 479 660 470 696 457 V520 H0Z" fill="#fff"/></svg><span class="tx" style="left:89.00px;top:280.68px;font-size:6.28px;line-height:6.28px;color:#ffffff;font-weight:normal;letter-spacing:-0.041px;font-family:"Liberation Sans",sans-serif;opacity:.85">Мандрик Ірина</span><span class="tx" style="left:66.00px;top:302.09px;font-size:6.98px;line-height:6.98px;color:#ffffff;font-weight:bold;letter-spacing:-0.468px;font-family:"Liberation Sans",sans-serif;opacity:.85">РЕГІОНАЛЬНІ ОСОБЛИВОСТІ</span><span class="tx" style="left:57.50px;top:313.09px;font-size:6.98px;line-height:6.98px;color:#ffffff;font-weight:bold;letter-spacing:-0.469px;font-family:"Liberation Sans",sans-serif;opacity:.85">ЗОВНІШНЬОЇ ТОРГІВЛІ ТОВАРАМИ</span><span class="tx" style="left:97.50px;top:324.09px;font-size:6.98px;line-height:6.98px;color:#ffffff;font-weight:bold;letter-spacing:-0.581px;font-family:"Liberation Sans",sans-serif;opacity:.85">УКРАЇНИ</span><div class="a" style="left:35px;top:397.6px;width:151px;height:32.39999999999998px;background:linear-gradient(#0b8fe0 0%,#2a9de9 18%,#4aaff0 40%,#68c0f6 65%,#7ccbfa 85%,#82cefb 100%);border-radius:1px 1px 0 0;"></div><svg class="a" style="left:35px;top:420px;" width="151" height="18" viewBox="0 0 151 18"><path d="M0 5 C14 1 33 -1 50 1 C72 4 91 11 124 14 C135 15 143 13 151 10 V18 H0Z" fill="#fff"/><path d="M80 3 C100 4 120 9 140 14" fill="none" stroke="#c9ebfd" stroke-width="0.8"/><path d="M105 12 C120 9 135 6 151 4" fill="none" stroke="#c9ebfd" stroke-width="0.8"/></svg><span class="tx" style="left:53.00px;top:400.56px;font-size:6.42px;line-height:6.42px;color:#f4fbff;font-weight:bold;letter-spacing:-0.073px;font-family:"Liberation Sans",sans-serif;">Обсяги зовнішньої торгівлі товарами</span><span class="tx" style="left:50.00px;top:408.56px;font-size:6.42px;line-height:6.42px;color:#f4fbff;font-weight:bold;letter-spacing:-0.126px;font-family:"Liberation Sans",sans-serif;">України у 2021-2023 рр., млрд дол. США</span><div class="a" style="left:42.5px;top:426px;width:1.0px;height:69px;background:#8a8a8a;"></div><div class="a" style="left:42.5px;top:494px;width:141.5px;height:1px;background:#8a8a8a;"></div><div class="a" style="left:46.2px;top:436px;width:9.399999999999999px;height:58px;background:#4a7bbf;"></div><div class="a" style="left:55.6px;top:431px;width:9.199999999999996px;height:63px;background:#c24a4a;"></div><div class="a" style="left:81.2px;top:456px;width:9.5px;height:38px;background:#4a7bbf;"></div><div class="a" style="left:90.7px;top:447px;width:8.899999999999991px;height:47px;background:#c24a4a;"></div><div class="a" style="left:116px;top:463px;width:9.700000000000003px;height:31px;background:#4a7bbf;"></div><div class="a" style="left:125.7px;top:440px;width:9.200000000000003px;height:54px;background:#c24a4a;"></div><div class="a" style="left:35px;top:542px;width:151px;height:27px;background:linear-gradient(#0b8fe0 0%,#2a9de9 18%,#4aaff0 40%,#68c0f6 65%,#7ccbfa 85%,#82cefb 100%);border-radius:1px 1px 0 0;"></div><div class="a" style="left:36.8px;top:570.3px;width:147.7px;height:76.70000000000005px;background:#ffffff;border:1px solid #dedede;box-shadow:0 0 1px #ccc;"></div><span class="tx" style="left:55.00px;top:545.92px;font-size:6.01px;line-height:6.01px;color:#f4fbff;font-weight:bold;letter-spacing:-0.648px;font-family:"Liberation Sans",sans-serif;">Структура експорту за широкими економічними</span><span class="tx" style="left:46.00px;top:552.92px;font-size:6.01px;line-height:6.01px;color:#f4fbff;font-weight:bold;letter-spacing:-0.681px;font-family:"Liberation Sans",sans-serif;">категоріями у розрізі товарних груп за 2021, 2022 та 2023</span><span class="tx" style="left:75.00px;top:559.42px;font-size:6.01px;line-height:6.01px;color:#f4fbff;font-weight:bold;letter-spacing:-0.747px;font-family:"Liberation Sans",sans-serif;">роках в Україні (млн дол. США)</span><div class="a" style="left:52px;top:619px;width:124px;height:1px;background:#d0d0d0;"></div><div class="a" style="left:87.4px;top:581.1px;width:7.0px;height:37.89999999999998px;background:#1f5e7c;"></div><div class="a" style="left:94.4px;top:595.2px;width:7.599999999999994px;height:23.799999999999955px;background:#f39b1b;"></div><div class="a" style="left:102px;top:599.6px;width:7.200000000000003px;height:19.399999999999977px;background:#d52a30;"></div><div class="a" style="left:118.6px;top:614.8px;width:7.1000000000000085px;height:4.2000000000000455px;background:#1f5e7c;"></div><div class="a" style="left:125.7px;top:615.7px;width:7.299999999999997px;height:3.2999999999999545px;background:#f39b1b;"></div><div class="a" style="left:133px;top:615.7px;width:7.400000000000006px;height:3.2999999999999545px;background:#d52a30;"></div><div class="a" style="left:57px;top:618px;width:5px;height:1px;background:#1f5e7c;"></div><div class="a" style="left:64px;top:618.5px;width:4px;height:0.5px;background:#f39b1b;"></div><div class="a" style="left:70px;top:618.5px;width:4px;height:0.5px;background:#d52a30;"></div><div class="a" style="left:44px;top:574px;width:26px;height:1.5px;background:#cfcfcf;"></div><div class="a" style="left:43px;top:585px;width:7px;height:0.7000000000000455px;background:#dddddd;"></div><div class="a" style="left:43px;top:591px;width:7px;height:0.7000000000000455px;background:#dddddd;"></div><div class="a" style="left:43px;top:598px;width:7px;height:0.7000000000000455px;background:#dddddd;"></div><div class="a" style="left:43px;top:605px;width:7px;height:0.7000000000000455px;background:#dddddd;"></div><div class="a" style="left:43px;top:612px;width:7px;height:0.7000000000000455px;background:#dddddd;"></div><div class="a" style="left:54px;top:622px;width:26px;height:0.7000000000000455px;background:#d8d8d8;"></div><div class="a" style="left:54px;top:625px;width:26px;height:0.7000000000000455px;background:#d8d8d8;"></div><div class="a" style="left:54px;top:628px;width:26px;height:0.7000000000000455px;background:#d8d8d8;"></div><div class="a" style="left:54px;top:631px;width:26px;height:0.7000000000000455px;background:#d8d8d8;"></div><div class="a" style="left:86px;top:622px;width:26px;height:0.7000000000000455px;background:#d8d8d8;"></div><div class="a" style="left:86px;top:625px;width:26px;height:0.7000000000000455px;background:#d8d8d8;"></div><div class="a" style="left:86px;top:628px;width:26px;height:0.7000000000000455px;background:#d8d8d8;"></div><div class="a" style="left:86px;top:631px;width:26px;height:0.7000000000000455px;background:#d8d8d8;"></div><div class="a" style="left:117px;top:622px;width:26px;height:0.7000000000000455px;background:#d8d8d8;"></div><div class="a" style="left:117px;top:625px;width:26px;height:0.7000000000000455px;background:#d8d8d8;"></div><div class="a" style="left:117px;top:628px;width:26px;height:0.7000000000000455px;background:#d8d8d8;"></div><div class="a" style="left:117px;top:631px;width:26px;height:0.7000000000000455px;background:#d8d8d8;"></div><div class="a" style="left:43px;top:641px;width:34px;height:0.7999999999999545px;background:#c8d8ea;"></div><div class="a" style="left:35.2px;top:687.2px;width:150.8px;height:25.09999999999991px;background:linear-gradient(#0b8fe0 0%,#2a9de9 18%,#4aaff0 40%,#68c0f6 65%,#7ccbfa 85%,#82cefb 100%);border-radius:1px 1px 0 0;"></div><svg class="a" style="left:35.2px;top:708px;" width="9" height="8" viewBox="0 0 9 8"><path d="M0 0H9C6 1 3 4 0 8Z" fill="#3ea8ee"/></svg><div class="a" style="left:43.8px;top:713px;width:140.5px;height:79.20000000000005px;background:#ffffff;border:1px solid #dedede;box-shadow:0 0 1px #ccc;"></div><span class="tx" style="left:57.00px;top:691.42px;font-size:6.01px;line-height:6.01px;color:#f4fbff;font-weight:bold;letter-spacing:-0.700px;font-family:"Liberation Sans",sans-serif;">Структура імпорту за широкими економічними</span><span class="tx" style="left:42.00px;top:698.22px;font-size:6.01px;line-height:6.01px;color:#f4fbff;font-weight:bold;letter-spacing:-0.575px;font-family:"Liberation Sans",sans-serif;">категоріями у розрізі товарних груп за 2021, 2022 та 2023</span><span class="tx" style="left:75.00px;top:704.72px;font-size:6.01px;line-height:6.01px;color:#f4fbff;font-weight:bold;letter-spacing:-0.692px;font-family:"Liberation Sans",sans-serif;">роках в Україні, млн дол. США</span><div class="a" style="left:57px;top:764.5px;width:118px;height:0.7999999999999545px;background:#d0d0d0;"></div><div class="a" style="left:62.6px;top:749.8px;width:6.800000000000004px;height:14.700000000000045px;background:#1f5e7c;"></div><div class="a" style="left:69.4px;top:754.6px;width:6.599999999999994px;height:9.899999999999977px;background:#f39b1b;"></div><div class="a" style="left:76px;top:751.6px;width:6.799999999999997px;height:12.899999999999977px;background:#d52a30;"></div><div class="a" style="left:92.1px;top:724.8px;width:6.300000000000011px;height:39.700000000000045px;background:#1f5e7c;"></div><div class="a" style="left:98.4px;top:736.4px;width:6.599999999999994px;height:28.100000000000023px;background:#f39b1b;"></div><div class="a" style="left:105px;top:735.5px;width:6.799999999999997px;height:29.0px;background:#d52a30;"></div><div class="a" style="left:121.3px;top:744.5px;width:6.1000000000000085px;height:20.0px;background:#1f5e7c;"></div><div class="a" style="left:127.4px;top:747.1px;width:6.799999999999983px;height:17.399999999999977px;background:#f39b1b;"></div><div class="a" style="left:134.2px;top:745.3px;width:6.800000000000011px;height:19.200000000000045px;background:#d52a30;"></div><div class="a" style="left:150.8px;top:763.5px;width:6.199999999999989px;height:1.0px;background:#1f5e7c;"></div><div class="a" style="left:157px;top:761.4px;width:6.099999999999994px;height:3.1000000000000227px;background:#f39b1b;"></div><div class="a" style="left:163.1px;top:758.8px;width:6.900000000000006px;height:5.7000000000000455px;background:#d52a30;"></div><div class="a" style="left:51px;top:718px;width:24px;height:1.5px;background:#cfcfcf;"></div><div class="a" style="left:60px;top:767px;width:25px;height:0.7000000000000455px;background:#cfcfcf;"></div><div class="a" style="left:60px;top:770px;width:25px;height:0.7000000000000455px;background:#cfcfcf;"></div><div class="a" style="left:60px;top:773px;width:25px;height:0.7000000000000455px;background:#cfcfcf;"></div><div class="a" style="left:60px;top:776px;width:25px;height:0.7000000000000455px;background:#cfcfcf;"></div><div class="a" style="left:60px;top:779px;width:25px;height:0.7000000000000455px;background:#cfcfcf;"></div><div class="a" style="left:60px;top:782px;width:25px;height:0.7000000000000455px;background:#cfcfcf;"></div><div class="a" style="left:89px;top:767px;width:25px;height:0.7000000000000455px;background:#cfcfcf;"></div><div class="a" style="left:89px;top:770px;width:25px;height:0.7000000000000455px;background:#cfcfcf;"></div><div class="a" style="left:89px;top:773px;width:25px;height:0.7000000000000455px;background:#cfcfcf;"></div><div class="a" style="left:89px;top:776px;width:25px;height:0.7000000000000455px;background:#cfcfcf;"></div><div class="a" style="left:89px;top:779px;width:25px;height:0.7000000000000455px;background:#cfcfcf;"></div><div class="a" style="left:89px;top:782px;width:25px;height:0.7000000000000455px;background:#cfcfcf;"></div><div class="a" style="left:118px;top:767px;width:25px;height:0.7000000000000455px;background:#cfcfcf;"></div><div class="a" style="left:118px;top:770px;width:25px;height:0.7000000000000455px;background:#cfcfcf;"></div><div class="a" style="left:118px;top:773px;width:25px;height:0.7000000000000455px;background:#cfcfcf;"></div><div class="a" style="left:118px;top:776px;width:25px;height:0.7000000000000455px;background:#cfcfcf;"></div><div class="a" style="left:118px;top:779px;width:25px;height:0.7000000000000455px;background:#cfcfcf;"></div><div class="a" style="left:118px;top:782px;width:25px;height:0.7000000000000455px;background:#cfcfcf;"></div><div class="a" style="left:148px;top:767px;width:25px;height:0.7000000000000455px;background:#cfcfcf;"></div><div class="a" style="left:148px;top:770px;width:25px;height:0.7000000000000455px;background:#cfcfcf;"></div><div class="a" style="left:51px;top:787px;width:31px;height:0.7999999999999545px;background:#c8d8ea;"></div><div class="a" style="left:0px;top:831px;width:237px;height:1px;background:#d2d2d2;"></div><div class="a" style="left:0px;top:832px;width:237px;height:25px;background:#f1f1f3;"></div><span class="tx" style="left:3.40px;top:838.63px;font-size:12.01px;line-height:12.01px;color:#555555;font-weight:normal;letter-spacing:0.014px;font-family:"Liberation Sans",sans-serif;">Слайд 1 из 10</span><svg class="a" style="left:97px;top:836px;" width="19" height="17" viewBox="0 0 19 17"><path d="M1.5 2.5H8.5V15.5H1.5Z M8.5 2.5H15.5V15.5H8.5" fill="none" stroke="#777" stroke-width="1.1"/><path d="M9 12L16 5L18 7L11 14H9Z" fill="#fff" stroke="#666" stroke-width="1"/></svg><span class="tx" style="left:128.50px;top:838.63px;font-size:12.01px;line-height:12.01px;color:#555555;font-weight:normal;letter-spacing:0.417px;font-family:"Liberation Sans",sans-serif;">украинский</span><svg class="a" style="left:954px;top:836px;" width="16" height="15" viewBox="0 0 16 15"><path d="M8 1L5 4H11Z" fill="#777"/><path d="M1 7H15M1 10H15M1 13H11" stroke="#777" stroke-width="1"/></svg><span class="tx" style="left:973.50px;top:838.63px;font-size:12.01px;line-height:12.01px;color:#555555;font-weight:normal;letter-spacing:0.336px;font-family:"Liberation Sans",sans-serif;">Заметки</span><svg class="a" style="left:1037px;top:836px;" width="17" height="16" viewBox="0 0 17 16"><path d="M0.5 0.5H15.5V10.5H7L3 14.5V10.5H0.5Z" fill="#6e6e6e"/></svg><span class="tx" style="left:1057.30px;top:838.63px;font-size:12.01px;line-height:12.01px;color:#555555;font-weight:normal;letter-spacing:0.278px;font-family:"Liberation Sans",sans-serif;">Примечания</span><div class="a" style="left:1146.3px;top:832px;width:35.100000000000136px;height:25px;background:#d3d3d3;"></div><svg class="a" style="left:1155px;top:836px;" width="18" height="16" viewBox="0 0 18 16"><rect x="0.5" y="0.5" width="16" height="14" fill="none" stroke="#6a6a6a"/><path d="M4 1V15M4 11H17" stroke="#6a6a6a"/><rect x="7" y="3.5" width="6" height="5" fill="none" stroke="#6a6a6a"/></svg><svg class="a" style="left:1191px;top:836px;" width="17" height="16" viewBox="0 0 17 16"><rect x="0.5" y="0.5" width="6.5" height="6.5" fill="none" stroke="#6a6a6a"/><rect x="9.5" y="0.5" width="6.5" height="6.5" fill="none" stroke="#6a6a6a"/><rect x="0.5" y="8.5" width="6.5" height="6.5" fill="none" stroke="#6a6a6a"/><rect x="9.5" y="8.5" width="6.5" height="6.5" fill="none" stroke="#6a6a6a"/></svg><svg class="a" style="left:1226px;top:836px;" width="17" height="16" viewBox="0 0 17 16"><path d="M0.5 1.5H8V14.5H0.5Z M8 1.5H15.5V14.5H8Z" fill="none" stroke="#6a6a6a"/><path d="M2 4.5H6.5M2 7H6.5M2 9.5H6.5M9.5 4.5H14M9.5 7H14M9.5 9.5H14" stroke="#6a6a6a" stroke-width="0.9"/></svg><svg class="a" style="left:1262px;top:835px;" width="17" height="18" viewBox="0 0 17 18"><path d="M0.5 1H16.5" stroke="#6a6a6a" stroke-width="1.2"/><rect x="2" y="1.5" width="13" height="8" fill="none" stroke="#6a6a6a"/><path d="M8.5 9.5V15M5.5 16H11.5" stroke="#6a6a6a"/></svg><div class="a" style="left:1293px;top:843.5px;width:8.5px;height:2.0px;background:#666;"></div><div class="a" style="left:1307px;top:844px;width:115px;height:1px;background:#c8c8c8;"></div><div class="a" style="left:1340px;top:838px;width:4px;height:13px;background:#666;"></div><div class="a" style="left:1364px;top:841px;width:1px;height:7px;background:#a8a8a8;"></div><div class="a" style="left:1428px;top:843.5px;width:10px;height:2.0px;background:#666;"></div><div class="a" style="left:1432px;top:839.5px;width:2px;height:10.0px;background:#666;"></div><span class="tx" style="left:1450.50px;top:838.63px;font-size:12.01px;line-height:12.01px;color:#555555;font-weight:normal;letter-spacing:0.477px;font-family:"Liberation Sans",sans-serif;">65%</span><svg class="a" style="left:1487px;top:836px;" width="16" height="16" viewBox="0 0 16 16"><rect x="0.5" y="0.5" width="14" height="14" fill="none" stroke="#8a8a8a"/><path d="M3 7.5H6M12 7.5H9M7.5 3V6M7.5 12V9" stroke="#555" stroke-width="1"/></svg><div class="a" style="left:497px;top:232px;width:733px;height:551px;background:#ffffff;border:1px solid #c8c8c8;"></div><div class="a" style="left:516px;top:251px;width:696px;height:480px;background:linear-gradient(#0b8fe0 0%,#2a9de9 18%,#4aaff0 40%,#68c0f6 65%,#7ccbfa 85%,#82cefb 100%);border-radius:5px 5px 0 0;"></div><svg class="a" style="left:516px;top:251px;" width="696" height="480" viewBox="0 0 696 480"><defs><linearGradient id="band" x1="0" y1="0" x2="1" y2="0"><stop offset="0" stop-color="#9fd8fc"/><stop offset="1" stop-color="#8fd2fb"/></linearGradient></defs><path d="M214 417 C300 410 420 418 515 441 C580 424 640 412 696 411 V480 H214Z" fill="#a6dbfd" opacity="0.75"/><path d="M214 417 C300 410 420 418 515 441 C560 452 600 462 640 472" fill="none" stroke="#e8f6ff" stroke-width="1.2"/><path d="M433 462.7 C460 455 490 448 515 441 C580 424 640 412 696 411" fill="none" stroke="#e8f6ff" stroke-width="1.2"/><path d="M0 431 C45 416 80 411 117 411 C170 411 220 420 280 432 C340 445 400 458 450 466 C500 474 540 479 575 479 C620 479 660 470 696 457 V480 H0Z" fill="#fff"/></svg><span class="tx" style="left:771.50px;top:383.90px;font-size:23.74px;line-height:23.74px;color:#ffffff;font-weight:normal;letter-spacing:1.777px;font-family:"Liberation Sans",sans-serif;">Мандрик Ірина</span><span class="tx" style="left:658.00px;top:485.25px;font-size:27.93px;line-height:27.93px;color:#ffffff;font-weight:bold;letter-spacing:0.315px;font-family:"Liberation Sans",sans-serif;">РЕГІОНАЛЬНІ ОСОБЛИВОСТІ</span><span class="tx" style="left:618.40px;top:534.85px;font-size:27.93px;line-height:27.93px;color:#ffffff;font-weight:bold;letter-spacing:0.273px;font-family:"Liberation Sans",sans-serif;">ЗОВНІШНЬОЇ ТОРГІВЛІ ТОВАРАМИ</span><span class="tx" style="left:804.00px;top:587.35px;font-size:27.93px;line-height:27.93px;color:#ffffff;font-weight:bold;letter-spacing:0.364px;font-family:"Liberation Sans",sans-serif;">УКРАЇНИ</span><svg class="a" style="left:221px;top:665px;" width="30" height="14" viewBox="0 0 30 14"><path d="M1 7L8 1V4.5H22V1L29 7L22 13V9.5H8V13Z" fill="#fff" stroke="#222" stroke-width="1"/></svg><div class="a" style="left:1617px;top:62px;width:200px;height:787px;background:#232323;border-radius:8px"></div><div class="a" style="left:1617px;top:62px;width:200px;height:113px;background:#a27264;overflow:hidden;border-radius:8px 8px 0 0;"><svg class="a" style="left:0;top:0;filter:blur(0.8px)" width="200" height="120"><path d="M0 0 L200 0 L200 2 L6 26 L0 26Z" fill="#d9c9c9"/></svg><div class="a" style="left:60px;top:-4px;width:150px;height:22px;background:linear-gradient(90deg,rgba(214,160,140,0),#cf8c74 60%,#b87058);filter:blur(2px);clip-path:polygon(0 0,100% 0,100% 20%,0 100%)"></div><svg class="a" style="left:0;top:0;filter:blur(0.8px)" width="200" height="120"><path d="M6 27 L171 5 L178 46 L78 54Z" fill="#86633f"/></svg><svg class="a" style="left:0;top:0;filter:blur(0.8px)" width="200" height="120"><path d="M180 0 L200 0 L200 46 L180 46Z" fill="#80603e"/></svg><svg class="a" style="left:0;top:0;filter:blur(0.6px)" width="200" height="120"><path d="M5 24 L200 0 L200 2.5 L5 27.5Z" fill="#2c3032"/></svg><svg class="a" style="left:0;top:0;filter:blur(0.6px)" width="200" height="120"><path d="M5 22 L200 -2 L200 -0.5 L5 24Z" fill="#6a8494"/></svg><svg class="a" style="left:0;top:0;filter:blur(0.8px)" width="200" height="120"><path d="M5 28 L80 51 L80 55 L5 33Z" fill="#2a2420"/></svg><svg class="a" style="left:0;top:0;filter:blur(0.8px)" width="200" height="120"><path d="M5 33 L80 55 L80 57 L5 36Z" fill="#7a6040"/></svg><svg class="a" style="left:0;top:0;filter:blur(0.8px)" width="200" height="120"><path d="M5 36 L80 57 L80 60 L5 40Z" fill="#2a2420"/></svg><div class="a" style="left:0px;top:0px;width:2.5px;height:113px;background:#d0cccc;"></div><div class="a" style="left:68.5px;top:52px;width:6.5px;height:36px;background:#2a2420;filter:blur(0.8px)"></div><div class="a" style="left:175px;top:0px;width:5px;height:46px;background:#2a2420;filter:blur(0.8px)"></div><div class="a" style="left:120px;top:46px;width:80px;height:3.5px;background:#2a2420;filter:blur(0.8px)"></div><div class="a" style="left:122px;top:49.5px;width:78px;height:63.5px;background:#a8784c;filter:blur(0.5px)"></div><div class="a" style="left:141.5px;top:49px;width:2.0px;height:43px;background:#6a3424;filter:blur(0.5px)"></div><div class="a" style="left:150px;top:80px;width:11px;height:4px;background:#d8d8dc;filter:blur(0.8px)"></div><div class="a" style="left:72px;top:26px;width:58px;height:76px;background:#3a2e28;border-radius:45%;filter:blur(1.5px);"></div><div class="a" style="left:78px;top:44px;width:43px;height:49px;background:#dfbfac;border-radius:46% 46% 50% 50%;filter:blur(1.2px);"></div><div class="a" style="left:80px;top:48px;width:16px;height:36px;background:#ead2c4;border-radius:40%;filter:blur(3px);"></div><div class="a" style="left:88px;top:65px;width:8px;height:3px;background:#4a3a32;border-radius:50%;filter:blur(0.6px);"></div><div class="a" style="left:104px;top:65px;width:8px;height:3px;background:#4a3a32;border-radius:50%;filter:blur(0.6px);"></div><svg class="a" style="left:0;top:0;filter:blur(1px)" width="200" height="120"><path d="M51 113 L58 100 L75 94 L120 92 L150 96 L157 113Z" fill="#1f3c9e"/></svg></div><div class="a" style="left:1621px;top:147.6px;width:94.59999999999991px;height:24.0px;background:rgba(40,40,40,.70);border-radius:6px"></div><svg class="a" style="left:1625px;top:152.6px;" width="16" height="15" viewBox="0 0 16 15"><path d="M6 1.5A2.5 2.5 0 0 1 10.5 3V8A2.5 2.5 0 0 1 6 8Z" fill="#e0494b"/><path d="M3.5 7A4.5 4.5 0 0 0 12.5 7M8 11.5V14" fill="none" stroke="#e0494b" stroke-width="1.2"/><path d="M1.5 14L14 1.5" stroke="#e0494b" stroke-width="1.4"/></svg><span class="tx" style="left:1647.70px;top:152.50px;font-size:15.36px;line-height:15.36px;color:#f4f4f4;font-weight:normal;letter-spacing:0.219px;font-family:"Liberation Sans",sans-serif;">Діана Гіс</span><div class="a" style="left:1617px;top:175px;width:200px;height:112px;background:#e2ddd8;overflow:hidden;"><div class="a" style="left:0px;top:0px;width:23px;height:112px;background:#3a2922;filter:blur(0.8px)"></div><div class="a" style="left:12px;top:0px;width:10px;height:112px;background:#4a3a32;filter:blur(1px)"></div><div class="a" style="left:22px;top:0px;width:18px;height:112px;background:#8a8a7c;filter:blur(1px)"></div><div class="a" style="left:26px;top:-4px;width:16px;height:24px;background:#c8d0b4;border-radius:30%;filter:blur(2px);"></div><div class="a" style="left:40px;top:0;width:120px;height:88px;background:#f8f8f6;filter:blur(1.5px)"></div><div class="a" style="left:156px;top:0;width:44px;height:112px;background:linear-gradient(90deg,#f0eeec,#ddd8d2 40%,#d8d2cc);filter:blur(1px)"></div><div class="a" style="left:137px;top:45px;width:34px;height:75px;background:#3a3636;border-radius:18% 18% 4% 4%;filter:blur(1.5px);"></div><div class="a" style="left:62px;top:10px;width:82px;height:72px;background:#d2b48e;border-radius:46% 46% 40% 40%;filter:blur(2.5px);"></div><div class="a" style="left:63px;top:48px;width:24px;height:34px;background:#b89470;border-radius:40%;filter:blur(2.5px);"></div><div class="a" style="left:118px;top:38px;width:28px;height:46px;background:#c6a27c;border-radius:40%;filter:blur(2.5px);"></div><div class="a" style="left:80px;top:24px;width:43px;height:56px;background:#e4ae9c;border-radius:46% 46% 50% 50%;filter:blur(1.5px);"></div><div class="a" style="left:94px;top:61px;width:13px;height:4.5px;background:#de3a52;border-radius:50%;filter:blur(0.8px);"></div><div class="a" style="left:88px;top:42px;width:8px;height:2.5px;background:#8a6a60;border-radius:50%;filter:blur(0.6px);"></div><div class="a" style="left:106px;top:42px;width:8px;height:2.5px;background:#8a6a60;border-radius:50%;filter:blur(0.6px);"></div><svg class="a" style="left:0;top:0;filter:blur(1.2px)" width="200" height="120"><path d="M55 112 L60 86 L78 72 L100 80 L125 72 L150 80 L165 95 L168 112Z" fill="#8ccab8"/></svg><div class="a" style="left:10px;top:50px;width:26px;height:13px;background:#6a9a48;border-radius:50%;filter:blur(1.5px);"></div><div class="a" style="left:17px;top:62px;width:17px;height:16px;background:#8a34a2;border-radius:20% 20% 40% 40%;filter:blur(1px);"></div><div class="a" style="left:-6px;top:75px;width:30px;height:40px;background:#4a7a72;border-radius:50%;filter:blur(2.5px);"></div></div><div class="a" style="left:1621px;top:261.2px;width:148.9000000000001px;height:24.100000000000023px;background:rgba(40,40,40,.70);border-radius:6px"></div><svg class="a" style="left:1625px;top:266.2px;" width="16" height="15" viewBox="0 0 16 15"><path d="M6 1.5A2.5 2.5 0 0 1 10.5 3V8A2.5 2.5 0 0 1 6 8Z" fill="#e0494b"/><path d="M3.5 7A4.5 4.5 0 0 0 12.5 7M8 11.5V14" fill="none" stroke="#e0494b" stroke-width="1.2"/><path d="M1.5 14L14 1.5" stroke="#e0494b" stroke-width="1.4"/></svg><span class="tx" style="left:1648.00px;top:265.80px;font-size:15.36px;line-height:15.36px;color:#f4f4f4;font-weight:normal;letter-spacing:0.073px;font-family:"Liberation Sans",sans-serif;">Оксана Новосад</span><div class="a" style="left:1617px;top:287px;width:200px;height:113px;background:#232323;overflow:hidden;"><div class="a" style="left:57px;top:2px;width:85px;height:111px;background:#5b92c4;"></div><div class="a" style="left:57px;top:0px;width:85px;height:2.5px;background:#5a2a2a;"></div><div class="a" style="left:57px;top:2px;width:85px;height:111px;overflow:hidden"><div class="a" style="left:-5px;top:-6px;width:95px;height:16px;background:#b8aca8;border-radius:10%;filter:blur(3px);"></div><div class="a" style="left:22px;top:10px;width:40px;height:26px;background:#c8b08a;border-radius:40%;filter:blur(2.5px);"></div><div class="a" style="left:52px;top:14px;width:34px;height:32px;background:#bca488;border-radius:40%;filter:blur(2.5px);"></div><div class="a" style="left:62px;top:30px;width:22px;height:16px;background:#7a8ac0;border-radius:40%;filter:blur(2px);"></div><div class="a" style="left:-6px;top:48px;width:16px;height:34px;background:#c49a68;border-radius:50%;filter:blur(2.5px);"></div><div class="a" style="left:66px;top:64px;width:22px;height:18px;background:#c8a070;border-radius:50%;filter:blur(2.5px);"></div><div class="a" style="left:12px;top:10px;width:20px;height:14px;background:#8ab4d8;border-radius:50%;filter:blur(3px);"></div><div class="a" style="left:24px;top:36px;width:36px;height:22px;background:#d8d0cc;border-radius:45%;filter:blur(2px);"></div><div class="a" style="left:26px;top:42px;width:34px;height:42px;background:#d0a494;border-radius:42% 42% 48% 48%;filter:blur(1.5px);"></div><div class="a" style="left:34px;top:68px;width:18px;height:4px;background:#b8a8a0;border-radius:50%;filter:blur(1px);"></div><div class="a" style="left:31px;top:55px;width:24px;height:5px;background:#a08078;border-radius:50%;filter:blur(1px);"></div><svg class="a" style="left:0;top:0;filter:blur(1.2px)" width="200" height="120"><path d="M0 112 L4 86 L20 76 L42 84 L62 76 L85 84 L85 112Z" fill="#e0381e"/></svg><svg class="a" style="left:0;top:0;filter:blur(1px)" width="200" height="120"><path d="M28 86 L40 86 L36 112 L22 112Z" fill="#3a2a22"/></svg></div></div><div class="a" style="left:1621px;top:372.9px;width:62.40000000000009px;height:24.700000000000045px;background:rgba(40,40,40,.70);border-radius:6px"></div><span class="tx" style="left:1625.80px;top:377.50px;font-size:15.36px;line-height:15.36px;color:#f4f4f4;font-weight:normal;letter-spacing:0.015px;font-family:"Liberation Sans",sans-serif;">Бейдык</span><div class="a" style="left:1617px;top:400px;width:200px;height:111px;background:#ccc3c2;overflow:hidden;"><div class="a" style="left:0;top:0;width:200px;height:111px;background:linear-gradient(90deg,#d2cccb,#cbc2c0 50%,#c8c4c4);"></div><div class="a" style="left:26px;top:58px;width:5px;height:16px;background:#2b2b2d;filter:blur(0.6px)"></div><div class="a" style="left:57px;top:58px;width:5px;height:16px;background:#2b2b2d;filter:blur(0.6px)"></div><div class="a" style="left:30px;top:50px;width:27px;height:24px;background:#eeeeee;filter:blur(0.6px)"></div><div class="a" style="left:0px;top:73px;width:68px;height:15px;background:#2b2b2d;filter:blur(0.8px)"></div><div class="a" style="left:0px;top:86px;width:80px;height:25px;background:#3a3636;filter:blur(2px)"></div><div class="a" style="left:107px;top:7px;width:58px;height:42px;background:#76504a;border-radius:50% 50% 30% 30%;filter:blur(2px);"></div><div class="a" style="left:110px;top:33px;width:54px;height:54px;background:#c8828a;border-radius:35% 35% 48% 48%;filter:blur(1.5px);"></div><div class="a" style="left:118px;top:51px;width:14px;height:4px;background:#6a4040;border-radius:50%;filter:blur(1px);"></div><div class="a" style="left:138px;top:51px;width:14px;height:4px;background:#6a4040;border-radius:50%;filter:blur(1px);"></div><svg class="a" style="left:0;top:0;filter:blur(1.2px)" width="200" height="120"><path d="M90 111 L92 88 L112 78 L140 84 L165 70 L200 80 L200 111Z" fill="#263038"/></svg></div><div class="a" style="left:1621px;top:485.9px;width:154.29999999999995px;height:24.0px;background:rgba(40,40,40,.70);border-radius:6px"></div><svg class="a" style="left:1625px;top:490.9px;" width="16" height="15" viewBox="0 0 16 15"><path d="M6 1.5A2.5 2.5 0 0 1 10.5 3V8A2.5 2.5 0 0 1 6 8Z" fill="#e0494b"/><path d="M3.5 7A4.5 4.5 0 0 0 12.5 7M8 11.5V14" fill="none" stroke="#e0494b" stroke-width="1.2"/><path d="M1.5 14L14 1.5" stroke="#e0494b" stroke-width="1.4"/></svg><span class="tx" style="left:1647.70px;top:490.30px;font-size:15.36px;line-height:15.36px;color:#f4f4f4;font-weight:normal;letter-spacing:0.094px;font-family:"Liberation Sans",sans-serif;">Бринчук Наталка</span><div class="a" style="left:1616px;top:511px;width:202px;height:115.5px;background:#2ee69a;"></div><div class="a" style="left:1619px;top:514px;width:196px;height:109.5px;background:#d0d6d8;overflow:hidden"><div class="a" style="left:0px;top:0px;width:63.5px;height:110px;background:#857a74;filter:blur(0.8px)"></div><div class="a" style="left:10px;top:0px;width:6px;height:110px;background:#958a84;border-radius:10%;filter:blur(2px);"></div><div class="a" style="left:35px;top:0px;width:5px;height:110px;background:#7a6e68;border-radius:10%;filter:blur(2px);"></div><div class="a" style="left:101px;top:70px;width:48px;height:40px;background:#d8b888;border-radius:30%;filter:blur(2px);"></div><div class="a" style="left:66px;top:25px;width:45px;height:36px;background:#c6b690;border-radius:45%;filter:blur(2px);"></div><div class="a" style="left:70px;top:39px;width:35px;height:38px;background:#d8a898;border-radius:42% 42% 50% 50%;filter:blur(1.5px);"></div><svg class="a" style="left:0;top:0;filter:blur(1.2px)" width="200" height="120"><path d="M44 112 L50 82 L70 73 L105 74 L122 84 L126 112Z" fill="#2a5838"/></svg><div class="a" style="left:159px;top:2px;width:45px;height:80px;background:#54463c;border-radius:50% 30% 10% 30%;filter:blur(2px);"></div><div class="a" style="left:172px;top:40px;width:28px;height:46px;background:#c89880;border-radius:40%;filter:blur(2px);"></div><svg class="a" style="left:0;top:0;filter:blur(1.2px)" width="200" height="120"><path d="M130 112 L136 84 L160 70 L180 80 L200 84 L200 112Z" fill="#1a1a1a"/></svg></div><div class="a" style="left:1621px;top:597.6px;width:124px;height:24.0px;background:rgba(40,40,40,.70);border-radius:6px"></div><span class="tx" style="left:1626.00px;top:602.20px;font-size:15.36px;line-height:15.36px;color:#f4f4f4;font-weight:normal;letter-spacing:-0.180px;font-family:"Liberation Sans",sans-serif;">Taras Pohrebskyi</span><div class="a" style="left:1617px;top:626.5px;width:200px;height:110.5px;background:#d6bf88;overflow:hidden;"><div class="a" style="left:-10px;top:-10px;width:110px;height:120px;background:#dcc792;border-radius:10%;filter:blur(6px);"></div><div class="a" style="left:15.4px;top:6.8px;width:44.2px;height:48.5px;background:#e6e4de;filter:blur(0.6px)"></div><div class="a" style="left:27px;top:14px;width:11px;height:27px;background:#3e5a34;border-radius:40%;filter:blur(1.5px);"></div><div class="a" style="left:38px;top:18px;width:12.5px;height:12.5px;background:#cf6c34;border-radius:50%;filter:blur(0.8px);"></div><div class="a" style="left:37px;top:34px;width:11px;height:9px;background:#cc7a3e;border-radius:50%;filter:blur(0.8px);"></div><div class="a" style="left:99.6px;top:6.8px;width:35.400000000000006px;height:49.7px;background:#e4e2da;filter:blur(0.6px)"></div><div class="a" style="left:104px;top:10px;width:62px;height:40px;background:#5e4434;border-radius:50% 50% 30% 30%;filter:blur(2px);"></div><div class="a" style="left:108px;top:18px;width:52px;height:68px;background:#c99a80;border-radius:42% 42% 48% 48%;filter:blur(1.5px);"></div><svg class="a" style="left:0;top:0;filter:blur(1.5px)" width="200" height="120"><path d="M145 40 L160 33 L185 38 L200 55 L200 78 L175 76 L150 60Z" fill="#d0a282"/></svg><div class="a" style="left:116px;top:53px;width:13px;height:4px;background:#5a4030;border-radius:50%;filter:blur(1px);"></div><div class="a" style="left:134px;top:53px;width:13px;height:4px;background:#5a4030;border-radius:50%;filter:blur(1px);"></div><svg class="a" style="left:0;top:0;filter:blur(1.2px)" width="200" height="120"><path d="M90 111 L93 82 L115 73 L140 86 L175 78 L200 72 L200 111Z" fill="#28282e"/></svg></div><div class="a" style="left:1621px;top:710.6px;width:172.9000000000001px;height:24.0px;background:rgba(40,40,40,.70);border-radius:6px"></div><svg class="a" style="left:1625px;top:715.6px;" width="16" height="15" viewBox="0 0 16 15"><path d="M6 1.5A2.5 2.5 0 0 1 10.5 3V8A2.5 2.5 0 0 1 6 8Z" fill="#e0494b"/><path d="M3.5 7A4.5 4.5 0 0 0 12.5 7M8 11.5V14" fill="none" stroke="#e0494b" stroke-width="1.2"/><path d="M1.5 14L14 1.5" stroke="#e0494b" stroke-width="1.4"/></svg><span class="tx" style="left:1648.30px;top:714.60px;font-size:15.36px;line-height:15.36px;color:#f4f4f4;font-weight:normal;letter-spacing:0.101px;font-family:"Liberation Sans",sans-serif;">Валентин Жаронкін</span><span class="tx" style="left:1625.00px;top:782.27px;font-size:20.95px;line-height:20.95px;color:#f4f4f4;font-weight:bold;letter-spacing:0.531px;font-family:"Liberation Sans",sans-serif;">Володимир&nbsp;&nbsp;Ла...</span><div class="a" style="left:1621px;top:822.7px;width:147px;height:24px;background:#2b2b2b;border-radius:6px"></div><span class="tx" style="left:1626.00px;top:827.50px;font-size:15.36px;line-height:15.36px;color:#f4f4f4;font-weight:normal;letter-spacing:0.340px;font-family:"Liberation Sans",sans-serif;">Володимир Лажнік</span></body></html>
